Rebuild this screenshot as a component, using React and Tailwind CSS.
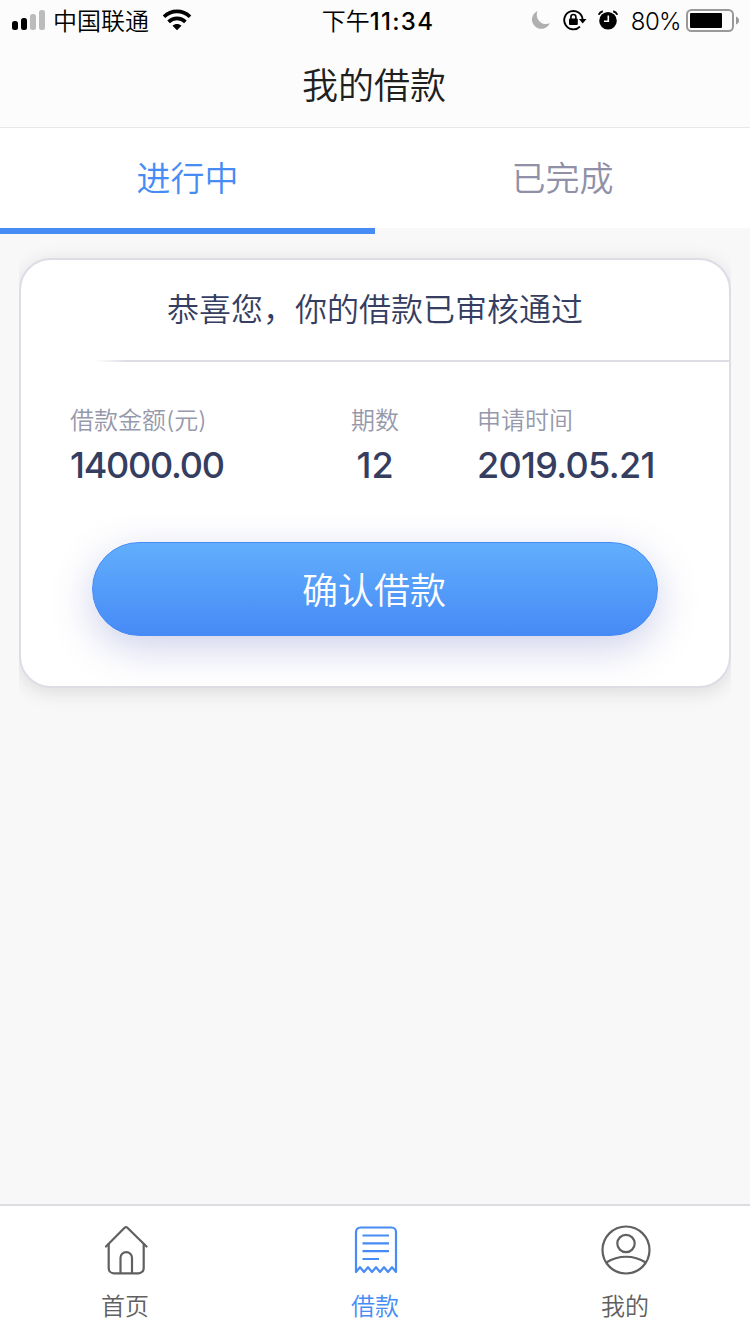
import { useState } from 'react';
import clsx from 'clsx';

const TABS = ['进行中', '已完成'];

const NAV_ITEMS = [
  { key: 'home', label: '首页', Icon: HomeIcon },
  { key: 'loan', label: '借款', Icon: ReceiptIcon },
  { key: 'mine', label: '我的', Icon: UserIcon },
];

/* ── Icons ─────────────────────────────────────────────────────────── */

function HomeIcon() {
  return (
    <svg width="50" height="50" viewBox="0 0 50 50" fill="none" stroke="currentColor" strokeWidth="2.200" strokeLinecap="round" strokeLinejoin="round">
      <path d="M6 21.500 24.600 2.800q1.400-1.300 2.800 0L46.500 21.500" />
      <path d="M8.700 19v24.300a5 5 0 0 0 5 5h25a5 5 0 0 0 5-5V19" />
      <path d="M20.500 47.500V32.800a5.500 5.500 0 0 1 11.500 0V47.500" />
    </svg>
  );
}

function ReceiptIcon() {
  return (
    <svg width="50" height="50" viewBox="0 0 50 50" fill="none" stroke="currentColor" strokeWidth="2.200" strokeLinejoin="round">
      <path d="M6 47V7a4.500 4.500 0 0 1 4.500-4.500h31a4.500 4.500 0 0 1 4.500 4.500V47l-4-4.800-4 4.800-4-4.800-4 4.800-4-4.800-4 4.800-4-4.800-4 4.800-4-4.800z" />
      <path d="M12.500 10.500H39M12.500 18.300H39M12.500 26.200H39M12.500 34H29" />
    </svg>
  );
}

function UserIcon() {
  return (
    <svg className="overflow-visible" width="50" height="50" viewBox="0 0 50 50" fill="none" stroke="currentColor" strokeWidth="2.200">
      <circle cx="26" cy="25" r="23.500" />
      <circle cx="26" cy="18.500" r="8.700" />
      <path d="M6.300 37.500c12-7.700 27.400-7.700 39.400 0" />
    </svg>
  );
}

function WifiIcon() {
  return (
    <svg width="30" height="22" viewBox="0 0 30 22" fill="none" stroke="#000" strokeWidth="3.600">
      <path d="M2 7.800c7.300-7.200 18.700-7.200 26 0" />
      <path d="M6.600 12.900c4.800-4.700 12-4.700 16.800 0" />
      <path d="M10.500 16.800c2.600-2.400 6.400-2.400 9 0L15 21.200z" fill="#000" stroke="none" />
    </svg>
  );
}

function MoonIcon() {
  return (
    <svg width="20" height="20" viewBox="0 0 20 20" fill="#b0b0b0">
      <path d="M6.500 1A9.300 9.300 0 1 0 18.800 13.200C11 16.500 3.500 9 6.500 1z" />
    </svg>
  );
}

function RotationLockIcon() {
  return (
    <svg width="24" height="22" viewBox="0 0 24 22" fill="none" stroke="#000" strokeWidth="1.900">
      <path d="M17 17.600A9.200 9.200 0 1 1 19.600 10.500" />
      <path d="M15.900 10h7.600l-3.800 4.500z" fill="#000" stroke="none" />
      <rect x="6" y="9.600" width="8.800" height="6.300" rx="1" fill="#000" stroke="none" />
      <path d="M7.900 10V8a2.500 2.500 0 0 1 5 0v2" strokeWidth="1.600" />
    </svg>
  );
}

function AlarmIcon() {
  return (
    <svg width="20" height="20" viewBox="0 0 20 20" fill="none">
      <circle cx="10" cy="10.800" r="8.800" fill="#000" />
      <path d="M.8 4.800Q1.600 2 4.800 1.200M19.200 4.800Q18.400 2 15.200 1.200" stroke="#000" strokeWidth="2" />
      <path d="M10.300 5.500v5.800H6" stroke="#fff" strokeWidth="1.600" />
    </svg>
  );
}

/* ── Sections ──────────────────────────────────────────────────────── */

function StatusBar() {
  return (
    <div className="grid h-10 grid-cols-[1fr_auto_1fr] grid-rows-[40px] items-center text-black">
      <div className="flex h-10 items-center pl-3">
        <div className="flex h-5 items-end gap-[3px]">
          <span className="h-[9px] w-1.5 rounded-[2.500px] bg-black" />
          <span className="h-3 w-1.5 rounded-[2.500px] bg-black" />
          <span className="h-4 w-1.5 rounded-[2.500px] bg-[#bcbcbc]" />
          <span className="h-5 w-1.5 rounded-[2.500px] bg-[#bcbcbc]" />
        </div>
        <span className="mt-1 ml-2 text-2xl leading-10">中国联通</span>
        <span className="ml-[13px]"><WifiIcon /></span>
      </div>
      <span className="mt-1 ml-1.5 text-2xl leading-10">
        下午<span className="font-[550] tracking-[1.3px]">11:34</span>
      </span>
      <div className="flex h-10 items-center justify-end pr-2.5">
        <MoonIcon />
        <span className="ml-3"><RotationLockIcon /></span>
        <span className="ml-[11px]"><AlarmIcon /></span>
        <span className="mt-[3px] ml-[13px] text-2xl leading-10 tracking-[-0.6px]">80%</span>
        <svg className="ml-[5px]" width="54" height="24" viewBox="0 0 54 24">
          <rect x="1" y="2" width="46" height="21" rx="4.500" fill="none" stroke="#999" strokeWidth="2" />
          <rect x="4" y="5" width="32" height="15" rx="1" fill="#000" />
          <path d="M50 8.500q3 1.200 3 4t-3 4z" fill="#999" />
        </svg>
      </div>
    </div>
  );
}

function Stat({ label, value, className, valueClass }) {
  return (
    <div className={className}>
      <p className="text-2xl leading-9 font-[350] text-[#9698ab]">{label}</p>
      <p className={clsx('mt-[3px] text-[36px] leading-[46px] font-[550] text-[#353e60]', valueClass)}>{value}</p>
    </div>
  );
}

function LoanCard() {
  return (
    <div className="overflow-hidden px-px pt-6 pb-8">
      <section className="-mx-px h-[430px] rounded-[32px] border-2 border-[#dcdde5] bg-white shadow-[0_4px_20px_rgba(0,0,0,0.12)]">
        <h2 className="pt-[26px] text-center text-[32px] leading-[48px] text-[#353e60]">恭喜您，你的借款已审核通过</h2>
        <div className="mt-[26px] ml-[74px] h-0.5 bg-linear-to-r from-transparent to-[#dcdde5] to-[32px]" />
        <div className="mt-[41px] flex pl-[49px]">
          <Stat className="w-[249px]" label="借款金额(元)" value="14000.00" valueClass="tracking-[-1.250px]" />
          <Stat className="w-[112px] text-center" label="期数" value="12" />
          <Stat className="ml-[46px]" label="申请时间" value="2019.05.21" valueClass="tracking-[-0.700px]" />
        </div>
        <button className="mx-auto mt-[54px] block h-[94px] w-[566px] rounded-full border border-[#478cf5] bg-linear-to-b from-[#62aefc] to-[#478af6] text-[36px] leading-[96px] text-white shadow-[0_12px_40px_rgba(80,90,180,0.28)]">
          <span className="block h-[92px] pr-0.5">确认借款</span>
        </button>
      </section>
    </div>
  );
}

export default function App() {
  const [tab, setTab] = useState(0);
  const [page, setPage] = useState('loan');

  return (
    <div className="flex h-[1334px] w-[750px] flex-col overflow-hidden bg-[#f8f8f8] font-['Inter','Noto_Sans_CJK_SC',sans-serif] font-[350]">
      <header className="h-32 border-b border-[#e8e8e8] bg-[#fcfcfc]">
        <StatusBar />
        <h1 className="pr-0.5 text-center text-[36px] leading-[92px] text-[#202020]">我的借款</h1>
      </header>

      {/* Tabs: the underline hangs below the white strip */}
      <div className="flex h-[106px]">
        {TABS.map((name, i) => (
          <button
            key={name}
            onClick={() => setTab(i)}
            className={clsx(
              'flex flex-1 flex-col text-[34px] leading-[102px]',
              i === tab ? 'text-[#478cf5]' : 'text-[#9090a8]',
            )}
          >
            <span className="h-[100px] w-full bg-white">{name}</span>
            <span className={clsx('h-1.5 w-full', i === tab && 'bg-[#478cf5]')} />
          </button>
        ))}
      </div>

      <main className="flex-1 px-[19px]">
        <LoanCard />
      </main>

      <nav className="flex h-[130px] border-t-2 border-[#dcdde0] bg-white">
        {NAV_ITEMS.map(({ key, label, Icon }) => (
          <button
            key={key}
            onClick={() => setPage(key)}
            className={clsx(
              'flex flex-1 flex-col items-center pt-[19px]',
              key === page ? 'text-[#478cf5]' : 'text-[#606060]',
            )}
          >
            <Icon />
            <span className="mt-3.5 text-2xl leading-9">{label}</span>
          </button>
        ))}
      </nav>
    </div>
  );
}
